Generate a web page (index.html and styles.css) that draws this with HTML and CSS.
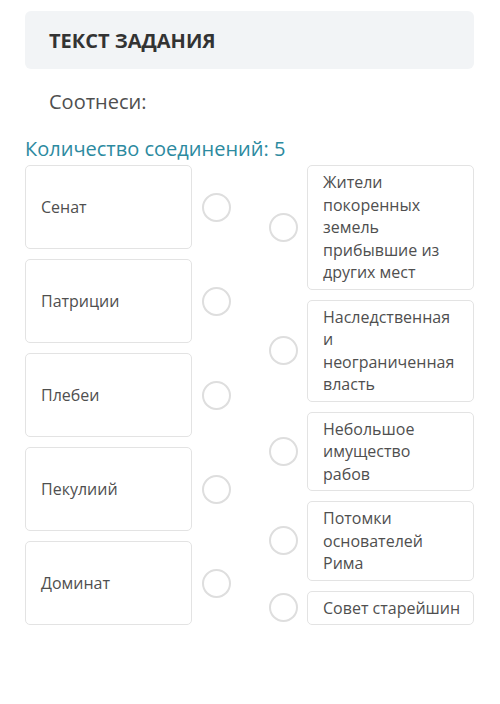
FILE: index.html
```html
<!DOCTYPE html>
<html lang="ru">
<head>
    <meta charset="UTF-8">
    <meta name="viewport" content="width=device-width, initial-scale=1.0">
    <title>Текст задания</title>
    <link rel="stylesheet" href="styles.css">
</head>
<body>
    <div class="container">
        <div class="task-header">ТЕКСТ ЗАДАНИЯ</div>
        <div class="task-text">Соотнеси:</div>
        <div class="links-count">Количество соединений: 5</div>

        <div class="pairs">
            <div class="col col-left">
                <div class="item">
                    <div class="card card-left">Сенат</div>
                    <span class="dot"></span>
                </div>
                <div class="item">
                    <div class="card card-left">Патриции</div>
                    <span class="dot"></span>
                </div>
                <div class="item">
                    <div class="card card-left">Плебеи</div>
                    <span class="dot"></span>
                </div>
                <div class="item">
                    <div class="card card-left">Пекулиий</div>
                    <span class="dot"></span>
                </div>
                <div class="item">
                    <div class="card card-left">Доминат</div>
                    <span class="dot"></span>
                </div>
            </div>
            <div class="col col-right">
                <div class="item">
                    <span class="dot"></span>
                    <div class="card card-right">Жители покоренных земель прибывшие из других мест</div>
                </div>
                <div class="item">
                    <span class="dot"></span>
                    <div class="card card-right">Наследственная и неограниченная власть</div>
                </div>
                <div class="item">
                    <span class="dot"></span>
                    <div class="card card-right">Небольшое имущество рабов</div>
                </div>
                <div class="item">
                    <span class="dot"></span>
                    <div class="card card-right">Потомки основателей Рима</div>
                </div>
                <div class="item">
                    <span class="dot"></span>
                    <div class="card card-right">Совет старейшин</div>
                </div>
            </div>
        </div>
    </div>
</body>
</html>
```

FILE: styles.css
```css
body, html {
    margin: 0;
    background-color: #fff;
    font-family: "Open Sans", Arial, sans-serif;
    color: #4f4f4f;
}
.container {
    padding: 11px 26px 0 25px;
}
.task-header {
    display: flex;
    align-items: center;
    height: 58px;
    padding-left: 24px;
    background-color: #f2f4f6;
    border-radius: 6px;
    font-size: 20px;
    font-weight: bold;
    color: #333;
}
.task-text {
    margin-top: 20px;
    padding-left: 24px;
    font-size: 20px;
    line-height: 26px;
    color: #4f4f4f;
}
.links-count {
    margin-top: 21px;
    font-size: 20px;
    line-height: 26px;
    color: #2c8aa0;
}
.pairs {
    display: flex;
    justify-content: space-between;
    margin-top: 3px;
}
.col {
    display: flex;
    flex-direction: column;
    gap: 10px;
}
.item {
    display: flex;
    align-items: center;
}
.card {
    box-sizing: border-box;
    width: 167px;
    border: 1px solid #e3e3e3;
    border-radius: 5px;
    font-size: 16px;
    background-color: #fff;
}
.card-left {
    display: flex;
    align-items: center;
    height: 84px;
    padding-left: 15px;
}
.card-right {
    padding: 5px 12px 5px 15px;
    line-height: 22.5px;
}
.dot {
    box-sizing: border-box;
    width: 29px;
    height: 29px;
    border: 2.5px solid #dedede;
    border-radius: 50%;
    flex-shrink: 0;
}
.col-left .dot {
    margin-left: 10px;
}
.col-right .dot {
    margin-right: 9px;
}
```
